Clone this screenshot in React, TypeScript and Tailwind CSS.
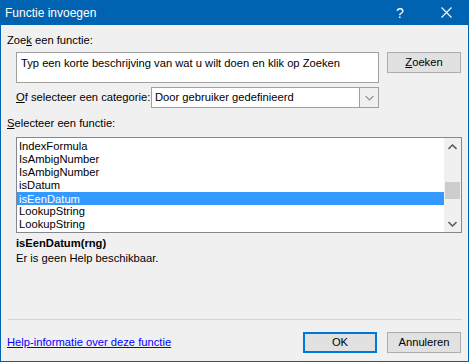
import React from 'react';

const functions = [
  'IndexFormula',
  'IsAmbigNumber',
  'IsAmbigNumber',
  'isDatum',
  'isEenDatum',
  'LookupString',
  'LookupString',
];

const ChevronUp = () => (
  <svg width="9" height="6" viewBox="0 0 9 6" className="block">
    <path d="M0.5 5 L4.5 1 L8.5 5" fill="none" stroke="#606060" strokeWidth="1.6" />
  </svg>
);

const ChevronDown = ({ color = '#606060', w = 1.6 }: { color?: string; w?: number }) => (
  <svg width="9" height="6" viewBox="0 0 9 6" className="block">
    <path d="M0.5 1 L4.5 5 L8.5 1" fill="none" stroke={color} strokeWidth={w} />
  </svg>
);

export default function App() {
  return (
    <div
      className="w-[469px] h-[362px] bg-[#f0f0f0] border-x border-b border-[#0063b1] flex flex-col text-[11.2px] text-black"
      style={{ fontFamily: '"Liberation Sans", Arial, sans-serif' }}
    >
      {/* title bar */}
      <div className="h-[25px] -mx-px bg-[#0063b1] flex items-center text-white shrink-0">
        <span className="pl-[5px] text-[12px] leading-none">Functie invoegen</span>
        <span className="ml-auto w-[22px] text-center text-[14px] leading-none">?</span>
        <span className="w-[46px] ml-[12px] flex items-center justify-center">
          <svg width="11" height="11" viewBox="0 0 11 11">
            <path d="M0.5 0.5 L10.5 10.5 M10.5 0.5 L0.5 10.5" stroke="white" strokeWidth="1.1" />
          </svg>
        </span>
      </div>

      <div className="flex flex-col pl-[6px] pr-[6px]">
        <div className="mt-[8px] h-[15px] leading-[15px]">
          Zoe<span className="underline">k</span> een functie:
        </div>

        <div className="mt-[4px] pl-[9px] flex items-start gap-[8px]">
          <div className="w-[363px] h-[31px] bg-white border border-[#a0a0a0] px-[4px] pt-[3px] leading-[15px]">
            Typ een korte beschrijving van wat u wilt doen en klik op Zoeken
          </div>
          <button
            type="button"
            className="w-[74px] h-[21px] bg-[#e1e1e1] border border-[#adadad] leading-none"
          >
            <span className="underline">Z</span>oeken
          </button>
        </div>

        <div className="mt-[4px] pl-[9px] flex items-center">
          <span className="w-[135px] leading-[15px] whitespace-nowrap">
            <span className="underline">O</span>f selecteer een categorie:
          </span>
          <div className="w-[228px] h-[21px] bg-white border border-[#a0a0a0] flex items-center">
            <span className="pl-[3px] flex-1">Door gebruiker gedefinieerd</span>
            <span className="w-[19px] h-full border-l border-[#a0a0a0] bg-[#f0f0f0] flex items-center justify-center">
              <ChevronDown color="#909090" w={1.1} />
            </span>
          </div>
        </div>

        <div className="mt-[8px] h-[15px] leading-[15px]">
          <span className="underline">S</span>electeer een functie:
        </div>

        <div className="mt-[6px] ml-[9px] w-[446px] h-[96px] bg-white border border-[#828790] flex">
          <div className="flex-1 pt-[2px] flex flex-col">
            {functions.map((name, i) => (
              <div
                key={i}
                className={`h-[13px] leading-[13px] pl-[2px] whitespace-nowrap ${
                  name === 'isEenDatum'
                    ? 'bg-[#3399ff] text-white border border-dotted border-[#c47d2a] pl-px leading-[11px]'
                    : ''
                }`}
              >
                {name}
              </div>
            ))}
          </div>
          <div className="w-[17px] bg-[#f0f0f0] flex flex-col items-center">
            <div className="h-[17px] flex items-center justify-center">
              <ChevronUp />
            </div>
            <div className="mt-[27px] w-[15px] h-[17px] bg-[#cdcdcd]" />
            <div className="mt-auto h-[17px] flex items-center justify-center">
              <ChevronDown />
            </div>
          </div>
        </div>

        <div className="mt-[3px] pl-[9px] font-bold h-[15px] leading-[15px]">isEenDatum(rng)</div>
        <div className="pl-[9px] h-[15px] leading-[15px]">Er is geen Help beschikbaar.</div>

        <div className="mt-[53px] ml-px w-[454px] h-px bg-[#d5d5d5]" />

        <div className="mt-[12px] flex items-center">
          <span className="text-[#0000ff] underline leading-[15px]">Help-informatie over deze functie</span>
          <button
            type="button"
            className="ml-auto w-[74px] h-[21px] bg-[#e1e1e1] border-2 border-[#0078d7] leading-none"
          >
            OK
          </button>
          <button
            type="button"
            className="ml-[10px] mr-px w-[74px] h-[21px] bg-[#e1e1e1] border border-[#adadad] leading-none"
          >
            Annuleren
          </button>
        </div>
      </div>
    </div>
  );
}
